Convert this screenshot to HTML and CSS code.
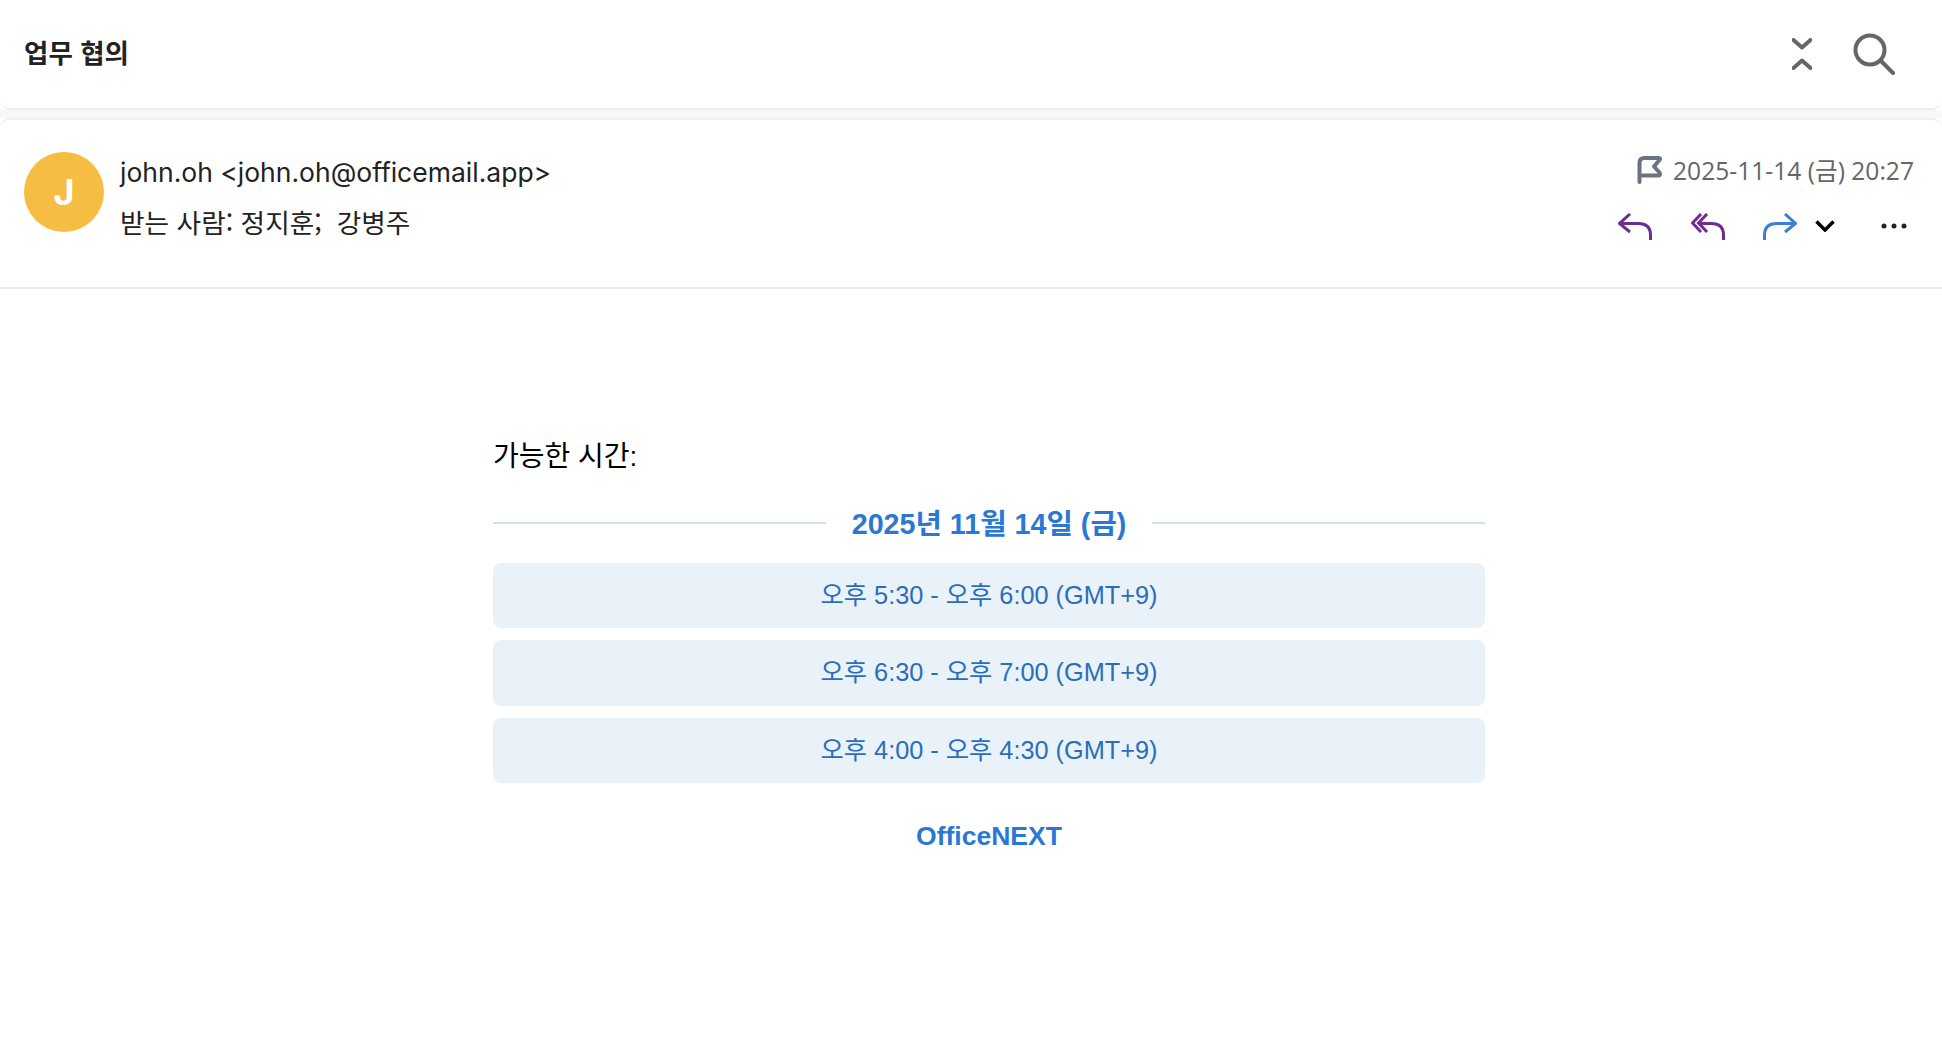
FILE: index.html
```html
<!DOCTYPE html>
<html lang="ko">
<head>
  <meta charset="utf-8">
  <title>업무 협의</title>
  <link rel="stylesheet" href="styles.css">
</head>
<body>
  <header class="topbar">
    <div class="subject">업무 협의</div>
    <div class="topbar-icons">
      <svg class="icon-collapse" width="20" height="32" viewBox="0 0 20 32"><path d="M1.500 2 L10 9.500 L18.500 2 M1.500 30 L10 22.500 L18.500 30"/></svg>
      <svg class="icon-search" width="42" height="42" viewBox="0 0 42 42"><circle cx="17" cy="17" r="14.500"/><path d="M27.500 27.500 L40 40"/></svg>
    </div>
  </header>

  <div class="gap"></div>

  <section class="message-head">
    <div class="avatar">J</div>
    <div class="people">
      <div class="sender">john.oh &lt;john.oh@officemail.app&gt;</div>
      <div class="recipients">받는 사람: 정지훈;&nbsp; 강병주</div>
    </div>
    <div class="meta">
      <div class="date-row">
        <svg class="icon-flag" width="26" height="28" viewBox="0 0 26 28"><path d="M2.500 26 V7 Q2.500 2 7.500 2 H21.500 Q24 2 22.500 4 L17 10.500 L22.500 16.500 Q24 19.500 21 19.500 H2.500"/></svg>
        <span class="date">2025-11-14 (금) 20:27</span>
      </div>
      <div class="actions">
        <svg class="act purple" width="34" height="28" viewBox="0 0 34 28"><path d="M12 1 L1.500 10.500 L12 19 M1.500 10.500 H20 Q32.500 10.500 32.500 22 V27"/></svg>
        <svg class="act purple" width="34" height="28" viewBox="0 0 34 28"><path d="M10 1 L1.500 10 L10 19 M16 1 L7.500 10 L16 19 M7.500 10.500 H20 Q32.500 10.500 32.500 22 V27"/></svg>
        <svg class="act blue" width="34" height="28" viewBox="0 0 34 28"><path d="M22 1 L32.500 10.500 L22 19 M32.500 10.500 H14 Q1.500 10.500 1.500 22 V27"/></svg>
        <svg class="act chevron" width="20" height="12" viewBox="0 0 20 12"><path d="M1.500 1.500 L10 10 L18.500 1.500"/></svg>
        <svg class="more" width="26" height="6" viewBox="0 0 26 6"><circle cx="3" cy="3" r="2.500"/><circle cx="13" cy="3" r="2.500"/><circle cx="23" cy="3" r="2.500"/></svg>
      </div>
    </div>
  </section>

  <main class="mail-body">
    <p class="intro">가능한 시간:</p>
    <div class="day-title">2025년 11월 14일 (금)</div>
    <div class="slot">오후 5:30 - 오후 6:00 (GMT+9)</div>
    <div class="slot">오후 6:30 - 오후 7:00 (GMT+9)</div>
    <div class="slot">오후 4:00 - 오후 4:30 (GMT+9)</div>
    <div class="brand">OfficeNEXT</div>
  </main>
</body>
</html>
```

FILE: styles.css
```css
* {
  box-sizing: border-box;
}
body {
  margin: 0;
  background: #fff;
  color: #222;
  font-family: Inter, "Noto Sans CJK KR", sans-serif;
}
svg {
  display: block;
  fill: none;
}
.topbar {
  height: 110px;
  padding: 0 12px 0 24px;
  display: flex;
  align-items: center;
  justify-content: space-between;
  border-bottom: 2px solid #eeeeef;
  border-radius: 0 0 10px 10px;
}
.subject {
  font-size: 26.500px;
  font-weight: 700;
  font-family: "Noto Sans CJK KR", sans-serif;
  color: #222;
  margin-top: -5px;
}
.topbar-icons {
  display: flex;
  align-items: center;
  gap: 42px;
  padding-right: 35px;
}
.icon-collapse {
  margin-right: -1px;
}
.icon-collapse path, .icon-search circle, .icon-search path {
  stroke: #666;
  stroke-width: 4;
  stroke-linecap: round;
  stroke-linejoin: round;
}
.gap {
  height: 8px;
  background: #f7f8fa;
}
.message-head {
  height: 171px;
  padding: 32px 29px 0 24px;
  display: flex;
  border-top: 2px solid #eeeeef;
  border-bottom: 2px solid #eeeeef;
  border-radius: 10px 10px 0 0;
}
.avatar {
  width: 80px;
  height: 80px;
  border-radius: 50%;
  background: #f6bd43;
  color: #fff;
  font-size: 36px;
  font-weight: 700;
  display: flex;
  align-items: center;
  justify-content: center;
}
.people {
  margin-left: 16px;
  flex: 1;
}
.sender {
  font-size: 26.500px;
  line-height: 42px;
  margin-top: -1px;
}
.recipients {
  font-size: 26.700px;
  line-height: 42px;
  margin-top: 8px;
  font-family: "Noto Sans CJK KR", sans-serif;
}
.meta {
  display: flex;
  flex-direction: column;
  align-items: flex-end;
}
.date-row {
  display: flex;
  align-items: center;
  gap: 10px;
  height: 36px;
}
.date {
  font-size: 24.600px;
  color: #666;
  margin-right: -1px;
  margin-top: -2px;
  font-family: "Open Sans", "Noto Sans CJK KR", sans-serif;
}
.actions {
  display: flex;
  align-items: center;
  margin-top: 23px;
  margin-right: 6px;
}
.act {
  margin-right: 38.500px;
  margin-top: 2px;
}
.act path {
  stroke-width: 3;
  stroke-linecap: butt;
  stroke-linejoin: miter;
}
.purple path {
  stroke: #6f2c91;
}
.blue path {
  stroke: #3f7fd0;
}
.blue {
  margin-right: 18px;
}
.chevron {
  margin-right: 46px;
  margin-top: 0;
}
.chevron path {
  stroke: #000;
  stroke-width: 3.500;
}
.more {
  fill: #222;
}
.icon-flag {
  margin-top: -1px;
}
.icon-flag path {
  stroke: #6b7280;
  stroke-width: 4;
  stroke-linejoin: round;
  stroke-linecap: round;
}
.mail-body {
  width: 992px;
  margin-left: 493px;
  font-family: "Liberation Sans", "Noto Sans CJK KR", sans-serif;
}
.intro {
  margin: 0;
  padding-top: 150px;
  font-size: 28px;
  line-height: 36px;
  color: #000;
}
.day-title {
  margin: 31px 0 20.500px;
  display: flex;
  align-items: center;
  gap: 26px;
  font-size: 28.700px;
  font-weight: 700;
  line-height: 36px;
  color: #2b78d4;
}
.day-title::before, .day-title::after {
  content: "";
  flex: 1;
  height: 2px;
  margin-bottom: 2px;
  background: #cfe2f3;
}
.slot {
  height: 65.500px;
  margin-bottom: 12px;
  padding-bottom: 5px;
  border-radius: 8px;
  background: #e9f1f9;
  color: #2a6ebb;
  font-size: 25.300px;
  display: flex;
  align-items: center;
  justify-content: center;
}
.brand {
  margin-top: 37px;
  text-align: center;
  font-size: 26.500px;
  font-weight: 700;
  line-height: 32px;
  color: #2b78d4;
}
```
